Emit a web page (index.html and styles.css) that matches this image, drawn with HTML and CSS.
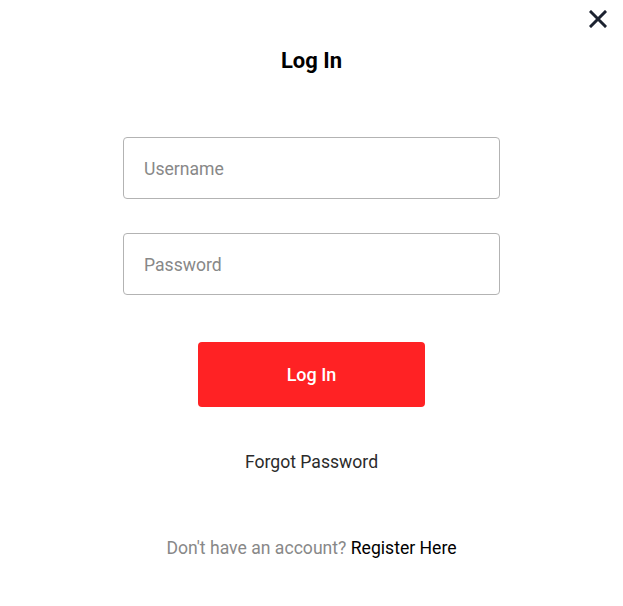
FILE: index.html
```html
<!DOCTYPE html>
<html lang="en">
<head>
<meta charset="utf-8">
<title>Log In</title>
<link rel="stylesheet" href="styles.css">
</head>
<body>
<div class="modal">
  <button class="close" aria-label="Close">
    <svg width="18" height="18" viewBox="0 0 18 18"><path d="M2 2 L16 16 M16 2 L2 16" stroke="#1c2230" stroke-width="3" stroke-linecap="square"/></svg>
  </button>
  <h1 class="title">Log In</h1>
  <form class="form">
    <input class="field" type="text" placeholder="Username">
    <input class="field" type="password" placeholder="Password">
    <button class="submit" type="button">Log In</button>
  </form>
  <a class="forgot" href="#">Forgot Password</a>
  <p class="register">Don't have an account? <a href="#">Register Here</a></p>
</div>
</body>
</html>
```
FILE: styles.css
```css
html, body {
  margin: 0;
  padding: 0;
  background: #fff;
}
body {
  font-family: Roboto, "Liberation Sans", sans-serif;
}
.modal {
  position: relative;
  width: 623px;
  height: 606px;
  display: flex;
  flex-direction: column;
  align-items: center;
}
.close {
  position: absolute;
  top: 10px;
  right: 16px;
  width: 18px;
  height: 18px;
  padding: 0;
  border: 0;
  background: none;
  cursor: pointer;
}
.close svg { display: block; }
.title {
  margin: 48px 0 0;
  font-size: 22px;
  line-height: 26px;
  font-weight: 700;
  color: #000;
}
.form {
  margin-top: 63px;
  display: flex;
  flex-direction: column;
  align-items: center;
}
.field {
  box-sizing: border-box;
  width: 377px;
  height: 62px;
  border: 1px solid #b3b3b3;
  border-radius: 4px;
  padding: 2px 20px 0;
  font-family: inherit;
  font-size: 17.6px;
  color: #333;
  outline: none;
}
.field + .field { margin-top: 34px; }
.field::placeholder { color: #888; }
.submit {
  margin-top: 47px;
  width: 227px;
  height: 65px;
  border: 0;
  border-radius: 4px;
  background: #ff2224;
  color: #fff;
  font-family: inherit;
  font-size: 18px;
  font-weight: 500;
  cursor: pointer;
}
.forgot {
  margin-top: 43px;
  font-size: 17.6px;
  line-height: 24px;
  color: #2b2b2b;
  text-decoration: none;
}
.register {
  margin: 62px 0 0;
  font-size: 17.6px;
  line-height: 24px;
  color: #888;
}
.register a {
  color: #000;
  text-decoration: none;
}
```
